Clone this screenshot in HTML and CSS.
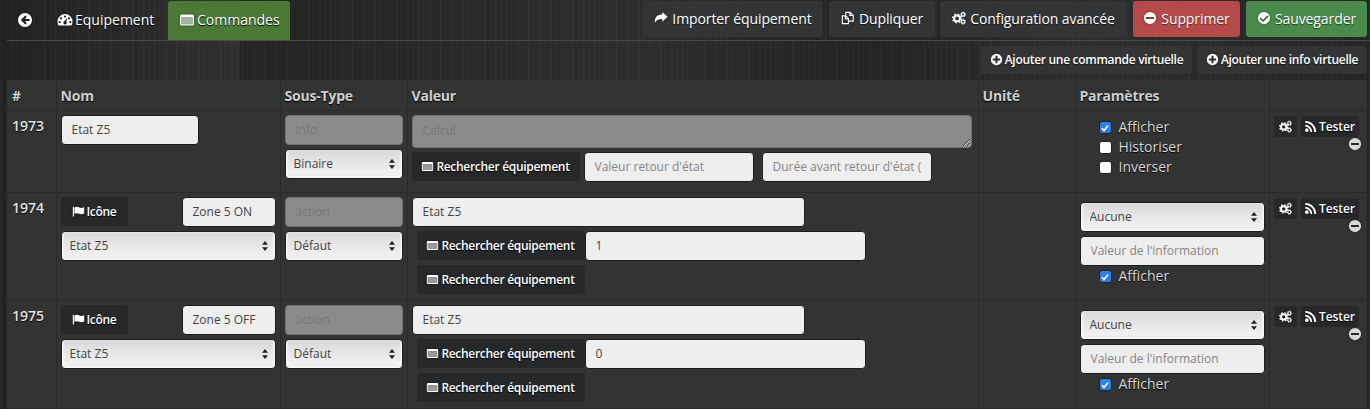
FILE: index.html
```html
<!DOCTYPE html>
<html lang="fr">
<head>
<meta charset="utf-8">
<title>Commandes</title>
<link rel="stylesheet" href="styles.css">
</head>
<body>
<svg class="defs" xmlns="http://www.w3.org/2000/svg">
  <symbol id="i-back" viewBox="0 0 16 16"><path fill-rule="evenodd" d="M8 1a7 7 0 1 1 0 14A7 7 0 0 1 8 1zM8.300 3.500 3.800 8l4.500 4.500 1.500-1.500-2-2H12.500V7H7.800l2-2z"/></symbol>
  <symbol id="i-gauge" viewBox="0 0 16 16"><path fill-rule="evenodd" d="M8 2a7.500 7.500 0 0 1 7.500 7.500c0 1.500-.4 2.900-1.100 4H1.600A7.500 7.500 0 0 1 .5 9.500 7.500 7.500 0 0 1 8 2zM8 3.400a1.100 1.100 0 1 0 0 2.200 1.100 1.100 0 0 0 0-2.200zM4 5.200a1.100 1.100 0 1 0 0 2.200 1.100 1.100 0 0 0 0-2.200zM12 5.200a1.100 1.100 0 1 0 0 2.200 1.100 1.100 0 0 0 0-2.200zM2.700 9a1.100 1.100 0 1 0 0 2.200 1.100 1.100 0 0 0 0-2.200zM13.300 9a1.100 1.100 0 1 0 0 2.200 1.100 1.100 0 0 0 0-2.200zM10.200 6 7.400 9.300a1.600 1.600 0 1 0 2 .6z"/></symbol>
  <symbol id="i-table" viewBox="0 0 16 16"><path fill-rule="evenodd" d="M2.500 2.500h11A1.500 1.500 0 0 1 15 4v8a1.500 1.500 0 0 1-1.500 1.500h-11A1.500 1.500 0 0 1 1 12V4a1.500 1.500 0 0 1 1.500-1.500zM2.200 5v7.300h11.600V5z"/><path opacity=".55" d="M2.200 5h11.600v7.300H2.200z"/></symbol>
  <symbol id="i-share" viewBox="0 0 16 16"><path d="M15.500 6.500 9.500 1v3C4 4 .8 6.500.8 13.500c1.500-3 4-4.500 8.700-4.500v3.300z"/></symbol>
  <symbol id="i-copy" viewBox="0 0 16 16"><path fill="none" stroke="currentColor" stroke-width="1.300" d="M5.500 4.500V1.500h5l3.500 3.500v6.500h-5M1.500 5.500h4l3 3v6h-7zM10 1.500V5h4M5 5.500V9h3.500"/></symbol>
  <symbol id="i-cogs" viewBox="0 0 16 16"><circle cx="5.800" cy="8.500" r="3.300" fill="none" stroke="currentColor" stroke-width="2.400"/><circle cx="5.800" cy="8.500" r="5" fill="none" stroke="currentColor" stroke-width="1.600" stroke-dasharray="2 1.930"/><circle cx="12.700" cy="4" r="1.900" fill="none" stroke="currentColor" stroke-width="1.400"/><circle cx="12.700" cy="4" r="2.900" fill="none" stroke="currentColor" stroke-width="1" stroke-dasharray="1.200 1.070"/><circle cx="12.700" cy="12.300" r="1.900" fill="none" stroke="currentColor" stroke-width="1.400"/><circle cx="12.700" cy="12.300" r="2.900" fill="none" stroke="currentColor" stroke-width="1" stroke-dasharray="1.200 1.070"/></symbol>
  <symbol id="i-minus" viewBox="0 0 16 16"><path fill-rule="evenodd" d="M8 1a7 7 0 1 1 0 14A7 7 0 0 1 8 1zM3.500 6.800v2.400h9V6.800z"/></symbol>
  <symbol id="i-plus" viewBox="0 0 16 16"><path fill-rule="evenodd" d="M8 1a7 7 0 1 1 0 14A7 7 0 0 1 8 1zM6.800 3.500v3.300H3.500v2.400h3.300v3.300h2.400V9.200h3.300V6.800H9.200V3.500z"/></symbol>
  <symbol id="i-check" viewBox="0 0 16 16"><path fill-rule="evenodd" d="M8 1a7 7 0 1 1 0 14A7 7 0 0 1 8 1zM12.100 4.900 6.900 10 4.300 7.500 3 8.800l3.900 3.900 6.500-6.500z"/></symbol>
  <symbol id="i-rss" viewBox="0 0 16 16"><circle cx="3.500" cy="12.500" r="2.200"/><path fill="none" stroke="currentColor" stroke-width="2.300" d="M1.500 7A7.500 7.500 0 0 1 9 14.700M1.500 2.300A12.200 12.200 0 0 1 13.800 14.700"/></symbol>
  <symbol id="i-flag" viewBox="0 0 16 16"><path d="M1 2h1.400v12H1z"/><path d="M3 3c2.500-1.300 4.500-.8 6 0s3.300.8 6-.3v7.800c-2.700 1.100-4.500 1.100-6 .3s-3.500-1.300-6 0z"/></symbol>
</svg>

<header class="topbar">
  <nav class="tabs">
    <a class="tab tab-back"><svg class="ic"><use href="#i-back"/></svg></a>
    <a class="tab"><svg class="ic"><use href="#i-gauge"/></svg>Equipement</a>
    <a class="tab tab-active"><svg class="ic"><use href="#i-table"/></svg>Commandes</a>
  </nav>
  <div class="actions">
    <a class="btn btn-dark"><svg class="ic"><use href="#i-share"/></svg>Importer équipement</a>
    <a class="btn btn-dark"><svg class="ic"><use href="#i-copy"/></svg>Dupliquer</a>
    <a class="btn btn-dark"><svg class="ic"><use href="#i-cogs"/></svg>Configuration avancée</a>
    <a class="btn btn-red"><svg class="ic"><use href="#i-minus"/></svg>Supprimer</a>
    <a class="btn btn-green"><svg class="ic"><use href="#i-check"/></svg>Sauvegarder</a>
  </div>
</header>

<div class="subactions">
  <a class="btn btn-dark btn-sub"><svg class="ic ic-sm"><use href="#i-plus"/></svg>Ajouter une commande virtuelle</a>
  <a class="btn btn-dark btn-sub"><svg class="ic ic-sm"><use href="#i-plus"/></svg>Ajouter une info virtuelle</a>
</div>

<table class="cmds">
  <colgroup>
    <col class="c-id"><col class="c-nom"><col class="c-type"><col class="c-val"><col class="c-unit"><col class="c-par"><col class="c-act">
  </colgroup>
  <thead>
    <tr><th>#</th><th>Nom</th><th>Sous-Type</th><th>Valeur</th><th>Unité</th><th>Paramètres</th><th></th></tr>
  </thead>
  <tbody>
    <tr class="row-info">
      <td class="cell-id">1973</td>
      <td><div class="stack"><input class="field w-138" value="Etat Z5"></div></td>
      <td>
        <div class="stack">
          <input class="field field-off w-full" value="info" disabled>
          <select class="pick w-full"><option>Binaire</option></select>
        </div>
      </td>
      <td>
        <div class="stack">
          <textarea class="area" disabled>Calcul</textarea>
          <div class="line">
            <a class="btn-search w-168"><svg class="ic ic-sm"><use href="#i-table"/></svg>Rechercher équipement</a>
            <input class="field w-170 ml-4" placeholder="Valeur retour d'état">
            <input class="field w-170 ml-8" placeholder="Durée avant retour d'état (min)">
          </div>
        </div>
      </td>
      <td></td>
      <td>
        <div class="checks">
          <label class="chk"><input type="checkbox" checked>Afficher</label>
          <label class="chk"><input type="checkbox">Historiser</label>
          <label class="chk"><input type="checkbox">Inverser</label>
        </div>
      </td>
      <td>
        <div class="tools">
          <a class="btn-tool"><svg class="ic ic-sm"><use href="#i-cogs"/></svg></a>
          <a class="btn-tool"><svg class="ic ic-sm"><use href="#i-rss"/></svg>Tester</a>
        </div>
        <svg class="ic ic-remove"><use href="#i-minus"/></svg>
      </td>
    </tr>
    <tr class="row-action">
      <td class="cell-id">1974</td>
      <td>
        <div class="stack">
          <div class="line between">
            <a class="btn-search w-67"><svg class="ic ic-sm"><use href="#i-flag"/></svg>Icône</a>
            <input class="field w-94" value="Zone 5 ON">
          </div>
          <select class="pick w-full"><option>Etat Z5</option></select>
        </div>
      </td>
      <td>
        <div class="stack">
          <input class="field field-off w-full" value="action" disabled>
          <select class="pick w-full"><option>Défaut</option></select>
        </div>
      </td>
      <td>
        <div class="stack">
          <input class="field w-393" value="Etat Z5">
          <div class="line indent">
            <a class="btn-search w-168"><svg class="ic ic-sm"><use href="#i-table"/></svg>Rechercher équipement</a>
            <input class="field w-281" value="1">
          </div>
          <div class="line indent">
            <a class="btn-search w-168"><svg class="ic ic-sm"><use href="#i-table"/></svg>Rechercher équipement</a>
          </div>
        </div>
      </td>
      <td></td>
      <td>
        <div class="stack stack-par">
          <select class="pick w-full"><option>Aucune</option></select>
          <input class="field w-full" placeholder="Valeur de l'information">
          <label class="chk chk-under"><input type="checkbox" checked>Afficher</label>
        </div>
      </td>
      <td>
        <div class="tools">
          <a class="btn-tool"><svg class="ic ic-sm"><use href="#i-cogs"/></svg></a>
          <a class="btn-tool"><svg class="ic ic-sm"><use href="#i-rss"/></svg>Tester</a>
        </div>
        <svg class="ic ic-remove"><use href="#i-minus"/></svg>
      </td>
    </tr>
    <tr class="row-action">
      <td class="cell-id">1975</td>
      <td>
        <div class="stack">
          <div class="line between">
            <a class="btn-search w-67"><svg class="ic ic-sm"><use href="#i-flag"/></svg>Icône</a>
            <input class="field w-94" value="Zone 5 OFF">
          </div>
          <select class="pick w-full"><option>Etat Z5</option></select>
        </div>
      </td>
      <td>
        <div class="stack">
          <input class="field field-off w-full" value="action" disabled>
          <select class="pick w-full"><option>Défaut</option></select>
        </div>
      </td>
      <td>
        <div class="stack">
          <input class="field w-393" value="Etat Z5">
          <div class="line indent">
            <a class="btn-search w-168"><svg class="ic ic-sm"><use href="#i-table"/></svg>Rechercher équipement</a>
            <input class="field w-281" value="0">
          </div>
          <div class="line indent">
            <a class="btn-search w-168"><svg class="ic ic-sm"><use href="#i-table"/></svg>Rechercher équipement</a>
          </div>
        </div>
      </td>
      <td></td>
      <td>
        <div class="stack stack-par">
          <select class="pick w-full"><option>Aucune</option></select>
          <input class="field w-full" placeholder="Valeur de l'information">
          <label class="chk chk-under"><input type="checkbox" checked>Afficher</label>
        </div>
      </td>
      <td>
        <div class="tools">
          <a class="btn-tool"><svg class="ic ic-sm"><use href="#i-cogs"/></svg></a>
          <a class="btn-tool"><svg class="ic ic-sm"><use href="#i-rss"/></svg>Tester</a>
        </div>
        <svg class="ic ic-remove"><use href="#i-minus"/></svg>
      </td>
    </tr>
  </tbody>
</table>
</body>
</html>
```
FILE: styles.css
```css
* { box-sizing: border-box; }

html, body { height: 100%; }

body {
  margin: 0;
  overflow: hidden;
  font-family: "Open Sans", "Liberation Sans", sans-serif;
  font-size: 14px;
  color: #fff;
  background-color: #2a2a2a;
  background-image:
    linear-gradient(90deg, rgba(0,0,0,.18) 0, rgba(0,0,0,0) 130px, rgba(255,255,255,.03) 240px, rgba(0,0,0,.12) 235px, rgba(0,0,0,.02) 420px, rgba(255,255,255,.02) 640px, rgba(0,0,0,.12) 860px, rgba(255,255,255,.02) 1100px, rgba(0,0,0,.1) 1370px),
    repeating-linear-gradient(90deg, rgba(255,255,255,.018) 0 2px, rgba(0,0,0,.05) 2px 5px, rgba(255,255,255,.012) 5px 6px, rgba(0,0,0,.03) 6px 11px);
}

.defs { display: none; }

.ic {
  width: 14px;
  height: 14px;
  fill: currentColor;
  flex: none;
  margin-right: 4px;
  filter: drop-shadow(0 0 1px rgba(0,0,0,.5));
}
.ic-sm { width: 13px; height: 13px; margin-right: 2px; }

a { color: inherit; text-decoration: none; }

/* top bar */
.topbar {
  display: flex;
  justify-content: space-between;
  height: 41px;
  margin-left: 7px;
  padding: 1px 3px 0 0;
  border-bottom: 1px solid #4a4a48;
}

.tabs { display: flex; }

.tab {
  display: flex;
  align-items: center;
  height: 39px;
  padding: 0 15px 2px 10px;
  font-weight: 500;
  text-shadow: 0 1px 1px #000;
}
.tab-back { width: 40px; }
.tab-back .ic { margin: 0; }
.tab .ic { width: 16px; height: 16px; margin-right: 2px; }
.tab:nth-child(2) { width: 121px; }
.tab-active {
  width: 122px;
  padding: 0 0 2px 11px;
  background: #4a7a36;
  border-radius: 3px 3px 0 0;
}

.actions { display: flex; gap: 6px; }

.btn {
  display: flex;
  align-items: center;
  justify-content: center;
  height: 36px;
  padding: 0 9px 2px;
  border-radius: 3px;
  font-weight: 500;
  letter-spacing: -.1px;
  text-shadow: 0 1px 1px rgba(0,0,0,.6);
  white-space: nowrap;
}
.btn-dark { background: #333436; }
.btn-red { background: #b54a4a; }
.btn-green { background: #4a8a4a; }
.actions .btn:nth-child(1) { width: 180px; }
.actions .btn:nth-child(2) { width: 106px; }
.actions .btn:nth-child(3) { width: 187px; margin-left: -1px; }
.actions .btn:nth-child(4) { width: 107px; }
.actions .btn:nth-child(5) { width: 121px; }

.subactions {
  display: flex;
  justify-content: flex-end;
  gap: 5px;
  height: 39px;
  padding: 5px 3px 0 0;
}
.btn-sub {
  height: 28px;
  padding: 0 8px 1px;
  font-size: 12px;
  font-weight: 600;
  letter-spacing: -.3px;
}
.btn-sub:nth-child(1) { width: 211px; }
.btn-sub:nth-child(2) { width: 170px; }

/* table */
.cmds {
  table-layout: fixed;
  width: 1360px;
  margin-left: 7px;
  border-collapse: collapse;
  background: #323433;
}
.c-id { width: 49px; }
.c-nom { width: 224px; }
.c-type { width: 127px; }
.c-val { width: 571px; }
.c-unit { width: 97px; }
.c-par { width: 194px; }
.c-act { width: 98px; }

th, td {
  padding: 4px;
  text-align: left;
  vertical-align: top;
  border: 1px solid #292a2a;
}
tr > :first-child { border-left: 0; padding-left: 5px; }
tr > :last-child { border-right: 0; }

th {
  height: 30px;
  padding-top: 1px;
  padding-bottom: 0;
  vertical-align: middle;
  border-top: 0;
  font-size: 14px;
  font-weight: 700;
  letter-spacing: -.2px;
  color: #cfcfcf;
  text-shadow: 0 1px 1px #000;
}

.row-info { height: 82px; }
.row-action { height: 108px; }

.cell-id {
  padding-top: 5px;
  font-weight: 600;
  color: #e2e2e2;
  text-shadow: 0 1px 1px #000;
}

.stack { display: flex; flex-direction: column; gap: 4px; }
.stack-par { margin-top: 5px; }
.line { display: flex; align-items: center; }
.between { justify-content: space-between; }
.indent { margin-left: 5px; }

.field, .area, .pick {
  height: 30px;
  padding: 0 10px;
  border: 1px solid #1d1d1d;
  border-radius: 4px;
  background: #eee;
  color: #444;
  font-family: inherit;
  font-size: 12px;
  outline: none;
}
.field::placeholder { color: #858585; opacity: 1; }

.field-off, .area {
  background: #8a8c8b;
  border-color: #6f7170;
  color: #777;
}

.area {
  display: block;
  width: 560px;
  height: 33px;
  padding: 7px 10px;
  line-height: 16px;
}

.pick {
  appearance: none;
  padding: 0 8px;
  background-color: #e6e6e6;
  background-image:
    url("data:image/svg+xml,%3Csvg xmlns='http://www.w3.org/2000/svg' width='6' height='10'%3E%3Cpath fill='%23222' d='M3 0 6 3.700H0zM3 10 0 6.300h6z'/%3E%3C/svg%3E"),
    linear-gradient(#d8d8d8, #e6e6e6 45%, #f0f0f0 85%, #dcdcdc);
  background-repeat: no-repeat;
  background-position: right 7px center, 0 0;
  background-size: 6px 10px, 100% 100%;
  box-shadow: inset 2px 0 2px rgba(255,255,255,.55), inset -2px 0 2px rgba(255,255,255,.55), inset 0 -2px 2px rgba(255,255,255,.7);
}
.stack-par .pick { padding: 0 9px; }

.w-full { width: 100%; }
.w-67 { width: 67px; }
.w-94 { width: 94px; }
.w-138 { width: 138px; }
.w-168 { width: 168px; }
.w-170 { width: 170px; }
.w-281 { width: 281px; }
.w-393 { width: 393px; }
.ml-4 { margin-left: 4px; }
.ml-8 { margin-left: 8px; }

.btn-search {
  display: flex;
  align-items: center;
  justify-content: center;
  height: 29px;
  border-radius: 3px;
  background: #26282a;
  font-size: 12px;
  font-weight: 600;
  letter-spacing: -.3px;
  white-space: nowrap;
  text-shadow: 0 1px 1px #000;
}

.checks {
  display: flex;
  flex-direction: column;
  margin-top: 2px;
  padding-left: 19px;
}
.chk {
  display: flex;
  align-items: center;
  height: 20px;
  font-size: 14px;
  color: #d6d6d6;
  text-shadow: 0 1px 1px #000;
}
.chk-under { padding-left: 19px; margin-top: -4px; }
.chk input {
  appearance: none;
  width: 13px;
  height: 13px;
  margin: 2px 7px 0 0;
  border: 1px solid #222;
  border-radius: 3px;
  background: #fff;
}
.chk input:checked {
  background: #2f7fe8 url("data:image/svg+xml,%3Csvg xmlns='http://www.w3.org/2000/svg' width='12' height='12'%3E%3Cpath fill='none' stroke='%23fff' stroke-width='1.500' d='M3 6.200 5 8.500 9 3.500'/%3E%3C/svg%3E") center / 12px 12px no-repeat;
}

.tools { display: flex; gap: 4px; margin-top: 1px; }
.btn-tool {
  display: flex;
  align-items: center;
  justify-content: center;
  height: 21px;
  min-width: 23px;
  padding: 0 4px;
  border-radius: 3px;
  background: #26282a;
  font-size: 12px;
  font-weight: 600;
  letter-spacing: -.1px;
  text-shadow: 0 1px 1px #000;
}
.btn-tool:first-child .ic { margin: 0; }
.btn-tool:last-child { width: 58px; }

.ic-remove {
  display: block;
  width: 14px;
  height: 14px;
  margin: 0 0 0 74px;
  color: #d8d8d8;
}
```
